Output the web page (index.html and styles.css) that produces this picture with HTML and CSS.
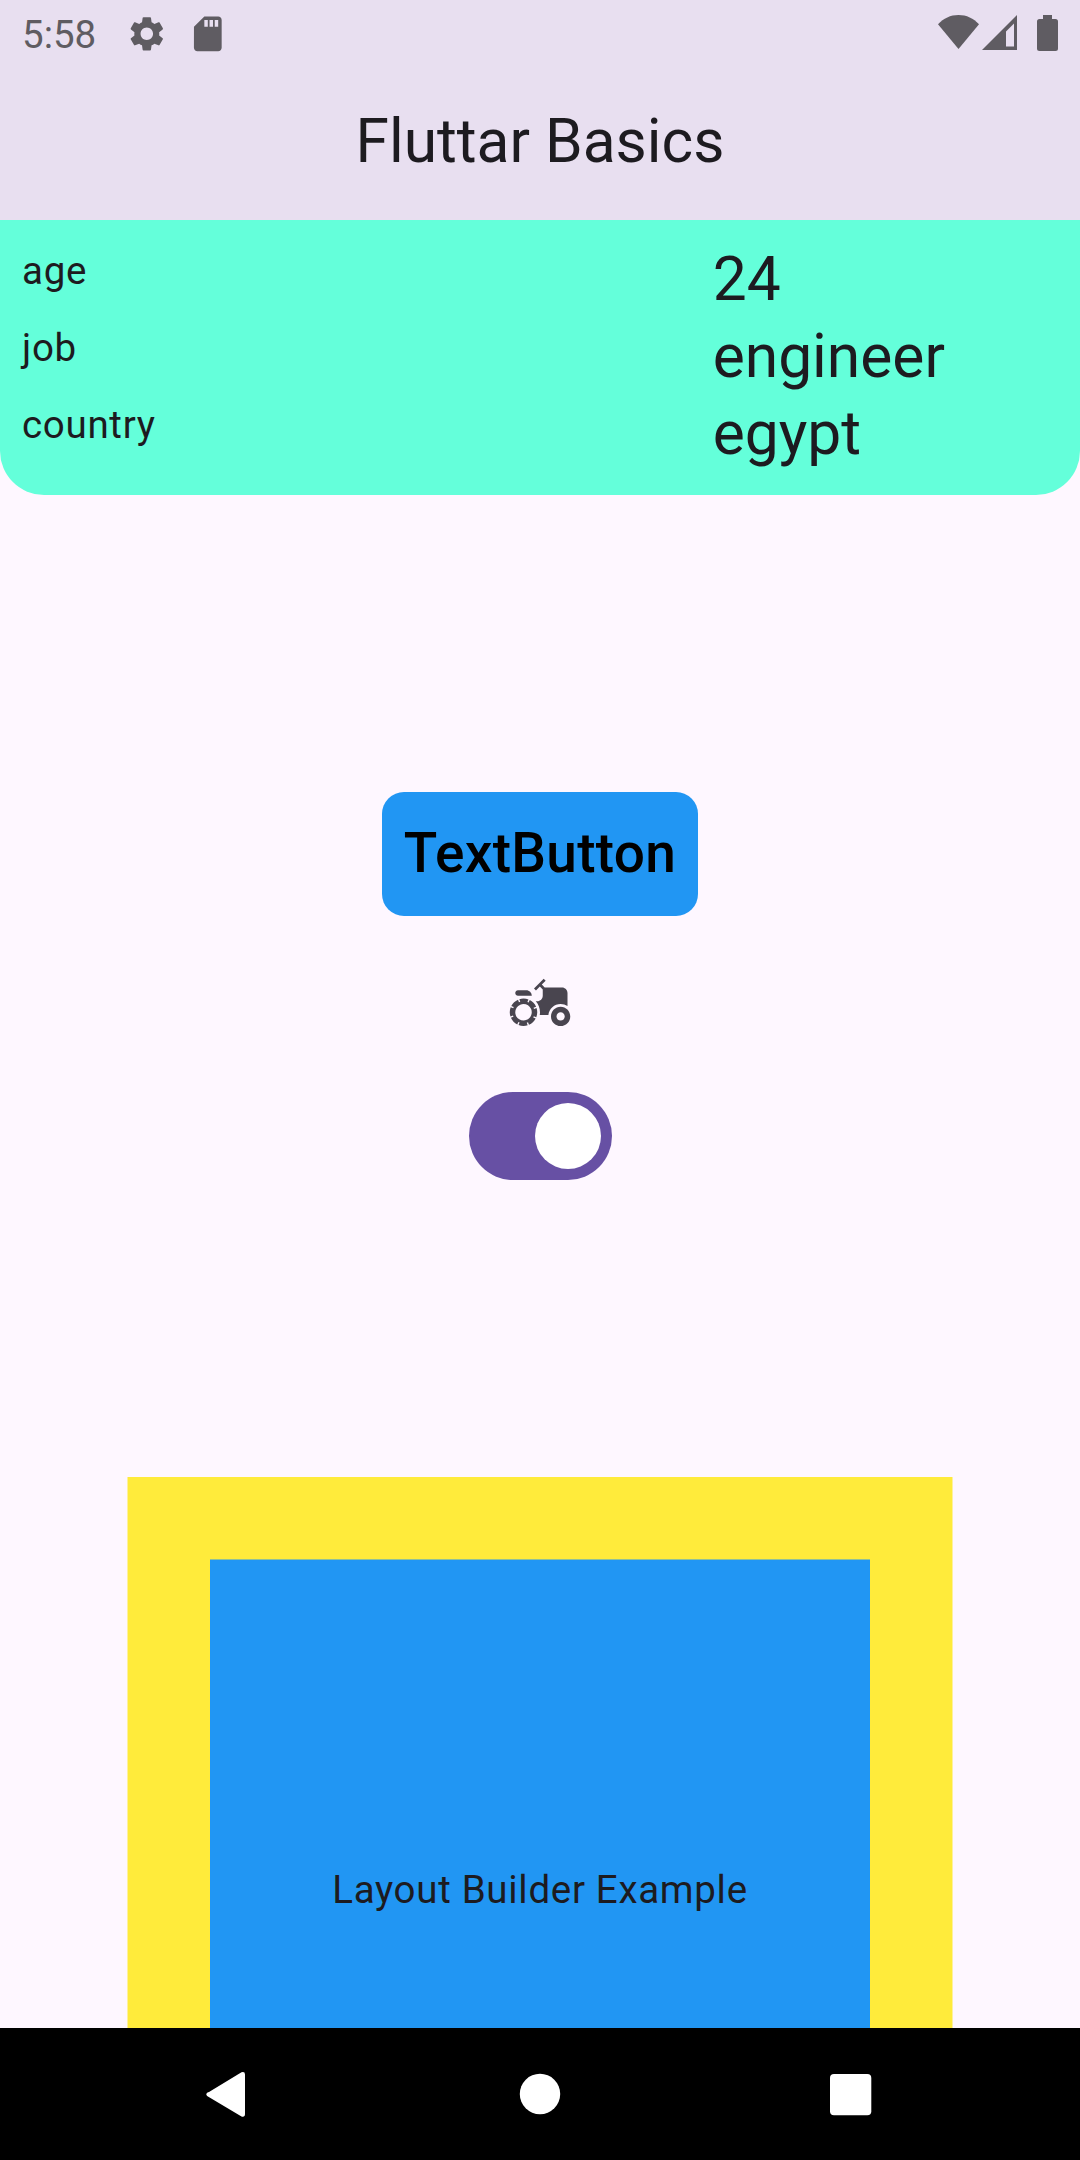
FILE: index.html
```html
<!DOCTYPE html>
<html lang="en">
<head>
<meta charset="utf-8">
<title>Fluttar Basics</title>
<link rel="stylesheet" href="styles.css">
</head>
<body>
<div class="screen">
  <header class="app-bar">
    <div class="status-bar">
      <span class="clock">5:58</span>
      <svg class="status-icon gear" viewBox="0 0 24 24"><path d="M19.14 12.94c.04-.3.06-.61.06-.94 0-.32-.02-.64-.07-.94l2.03-1.58c.18-.14.23-.41.12-.61l-1.92-3.32c-.12-.22-.37-.29-.59-.22l-2.39.96c-.5-.38-1.03-.7-1.62-.94l-.36-2.54c-.04-.24-.24-.41-.48-.41h-3.84c-.24 0-.43.17-.47.41l-.36 2.54c-.59.24-1.13.57-1.62.94l-2.39-.96c-.22-.08-.47 0-.59.22L2.74 8.87c-.12.21-.08.47.12.61l2.03 1.58c-.05.3-.09.63-.09.94s.02.64.07.94l-2.03 1.58c-.18.14-.23.41-.12.61l1.92 3.32c.12.22.37.29.59.22l2.39-.96c.5.38 1.03.7 1.62.94l.36 2.54c.05.24.24.41.48.41h3.84c.24 0 .44-.17.47-.41l.36-2.54c.59-.24 1.13-.56 1.62-.94l2.39.96c.22.08.47 0 .59-.22l1.92-3.32c.12-.22.07-.47-.12-.61l-2.01-1.58zM12 15.6c-1.98 0-3.6-1.62-3.6-3.6s1.62-3.6 3.6-3.6 3.6 1.62 3.6 3.6-1.62 3.6-3.6 3.6z"/></svg>
      <svg class="status-icon card" viewBox="0 0 24 24"><path d="M18 2h-8L4.02 8 4 20c0 1.100.9 2 2 2h12c1.100 0 2-.9 2-2V4c0-1.100-.9-2-2-2zm-6 6h-2V4h2v4zm3 0h-2V4h2v4zm3 0h-2V4h2v4z"/></svg>
      <div class="status-right">
        <svg class="wifi" viewBox="0 0 41 34"><path d="M20.500 34 0 9.300C5.500 3.300 12.500 0 20.500 0S35.500 3.300 41 9.300Z"/></svg>
        <svg class="signal" viewBox="0 0 35 35"><path fill-rule="evenodd" d="M35 0V35H0ZM32 8.500 24 16.500V31.500H32Z"/></svg>
        <svg class="battery" viewBox="0 0 21 36"><path d="M6 0h9v4h3.500Q21 4 21 6.500v27Q21 36 18.500 36h-16Q0 36 0 33.500v-27Q0 4 2.500 4H6Z"/></svg>
      </div>
    </div>
    <h1 class="title">Fluttar Basics</h1>
  </header>

  <main class="content">
    <dl class="info">
      <dt>age</dt><dd>24</dd>
      <dt>job</dt><dd>engineer</dd>
      <dt>country</dt><dd>egypt</dd>
    </dl>

    <section class="controls">
      <button class="text-button" type="button">TextButton</button>
      <svg class="tractor" viewBox="0 0 24 24"><path d="M19.500,12c0.930,0,1.780,0.280,2.500,0.760V8c0-1.100-0.900-2-2-2h-6.290l-1.060-1.060l1.410-1.410l-0.710-0.710L9.820,6.350l0.710,0.710l1.410-1.410L13,6.710V9c0,1.100-0.900,2-2,2h-0.540c0.950,1.060,1.540,2.460,1.540,4c0,0.340-0.040,0.670-0.090,1h3.140C15.300,13.750,17.190,12,19.500,12z"/><path d="M19.500,13c-1.930,0-3.500,1.570-3.500,3.500s1.570,3.500,3.500,3.500s3.500-1.570,3.500-3.500S21.430,13,19.500,13z M19.500,18c-0.830,0-1.500-0.670-1.500-1.500s0.670-1.500,1.500-1.500s1.500,0.670,1.500,1.500S20.330,18,19.500,18z"/><path d="M4,9h5c0-1.100-0.900-2-2-2H4C3.450,7,3,7.450,3,8C3,8.550,3.450,9,4,9z"/><path d="M9.830,13.820l-0.180-0.470L10.580,13c-0.460-1.060-1.280-1.910-2.310-2.430l-0.400,0.890l-0.460-0.210l0.400-0.900C7.260,10.130,6.640,10,6,10c-0.530,0-1.040,0.110-1.520,0.260l0.340,0.910l-0.470,0.180L4,10.420c-1.060,0.460-1.910,1.280-2.430,2.310l0.890,0.400l-0.210,0.460l-0.900-0.400C1.130,13.740,1,14.360,1,15c0,0.530,0.110,1.040,0.260,1.520l0.910-0.340l0.180,0.470L1.420,17c0.460,1.060,1.280,1.910,2.310,2.430l0.400-0.890l0.460,0.210l-0.400,0.900C4.740,19.870,5.360,20,6,20c0.530,0,1.040-0.110,1.520-0.260l-0.340-0.910l0.470-0.180L8,19.580c1.060-0.460,1.910-1.280,2.430-2.310l-0.890-0.400l0.210-0.460l0.900,0.400C10.870,16.260,11,15.640,11,15c0-0.530-0.110-1.040-0.260-1.520L9.830,13.820z M7.150,17.770c-1.530,0.630-3.290-0.090-3.920-1.620c-0.630-1.530,0.090-3.290,1.620-3.920c1.530-0.630,3.290,0.090,3.920,1.620C9.410,15.380,8.680,17.140,7.150,17.770z"/></svg>
      <div class="switch" role="switch" aria-checked="true"><span class="thumb"></span></div>
    </section>

    <section class="outer-box">
      <div class="inner-box">Layout Builder Example</div>
    </section>
  </main>

  <nav class="nav-bar">
    <svg class="nav-icon" viewBox="0 0 60 60"><path d="M14 28 46.500 8.300Q50 7.300 50 10.500V50Q50 53.500 46.500 52.500L12.500 32.200Q10 30.300 12.500 28.500Z"/></svg>
    <svg class="nav-icon" viewBox="0 0 60 60"><circle cx="30" cy="30" r="20.200"/></svg>
    <svg class="nav-icon" viewBox="0 0 60 60"><rect x="5" y="10" width="41.300" height="41.300" rx="4"/></svg>
  </nav>
</div>
</body>
</html>
```
FILE: styles.css
```css
* { box-sizing: border-box; margin: 0; padding: 0; }

body {
  font-family: Roboto, "Liberation Sans", sans-serif;
  color: #1d1b20;
  background: #fef7ff;
}

svg { display: block; }

.screen {
  width: 1080px;
  height: 2160px;
  display: flex;
  flex-direction: column;
  overflow: hidden;
}

.app-bar {
  flex: none;
  height: 220px;
  background: #e8dff0;
}

.status-bar {
  height: 66px;
  padding: 0 22px;
  display: flex;
  align-items: center;
  color: #5f5c62;
}

.status-bar svg { fill: #5f5c62; }

.clock {
  width: 103.500px;
  font-size: 38.5px;
  line-height: 66px;
  padding-top: 3px;
}

.status-icon { width: 41.6px; height: 41.6px; margin-top: 1px; }
.card { margin-left: 19.500px; }

.status-right {
  margin-left: auto;
  display: flex;
  align-items: flex-start;
  height: 36px;
}

.wifi { width: 41px; height: 34px; }
.signal { width: 35px; height: 35px; margin-left: 3px; }
.battery { width: 21px; height: 36px; margin-left: 20px; }

.title {
  font-size: 60.5px;
  font-weight: 400;
  line-height: 77px;
  margin-top: 37px;
  text-align: center;
}

.content {
  flex: 1;
  min-height: 0;
  overflow: hidden;
  display: flex;
  flex-direction: column;
  align-items: center;
}

.info {
  flex: none;
  width: 100%;
  height: 275px;
  padding: 22px;
  display: grid;
  grid-template-columns: 2fr 1fr;
  grid-auto-rows: 77px;
  background: #64ffda;
  border-radius: 0 0 44px 44px;
}

.info dt {
  font-size: 38.5px;
  line-height: 57px;
  letter-spacing: 0.69px;
}

.info dd {
  font-size: 60.5px;
  line-height: 75px;
}

.controls {
  flex: none;
  height: 982px;
  padding-top: 297px;
  display: flex;
  flex-direction: column;
  align-items: center;
}

.text-button {
  width: 316px;
  height: 124px;
  padding-bottom: 2px;
  border: 0;
  border-radius: 22px;
  background: #2196f3;
  color: #000;
  font: 500 55px/79px Roboto, "Liberation Sans", sans-serif;
  letter-spacing: 0.275px;
}

.tractor {
  width: 66px;
  height: 66px;
  margin-top: 55px;
  fill: #49454f;
}

.switch {
  width: 143px;
  height: 88px;
  margin-top: 55px;
  padding: 11px;
  display: flex;
  justify-content: flex-end;
  border-radius: 44px;
  background: #6750a4;
}

.thumb {
  width: 66px;
  height: 66px;
  border-radius: 50%;
  background: #fff;
}

.outer-box {
  flex: none;
  width: 826px;
  height: 825px;
  padding: 82px;
  border: solid #fef19d;
  border-width: 0 1px;
  background: #ffeb3b;
}

.inner-box {
  width: 660px;
  height: 661px;
  padding-bottom: 2px;
  display: flex;
  align-items: center;
  justify-content: center;
  border-top: 1px solid #90c097;
  background: #2196f3;
  font-size: 38.5px;
  line-height: 55px;
  letter-spacing: 0.69px;
}

.nav-bar {
  flex: none;
  height: 132px;
  padding: 0 195px;
  display: flex;
  align-items: center;
  justify-content: space-between;
  background: #000;
}

.nav-icon { width: 60px; height: 60px; fill: #fff; }
```
